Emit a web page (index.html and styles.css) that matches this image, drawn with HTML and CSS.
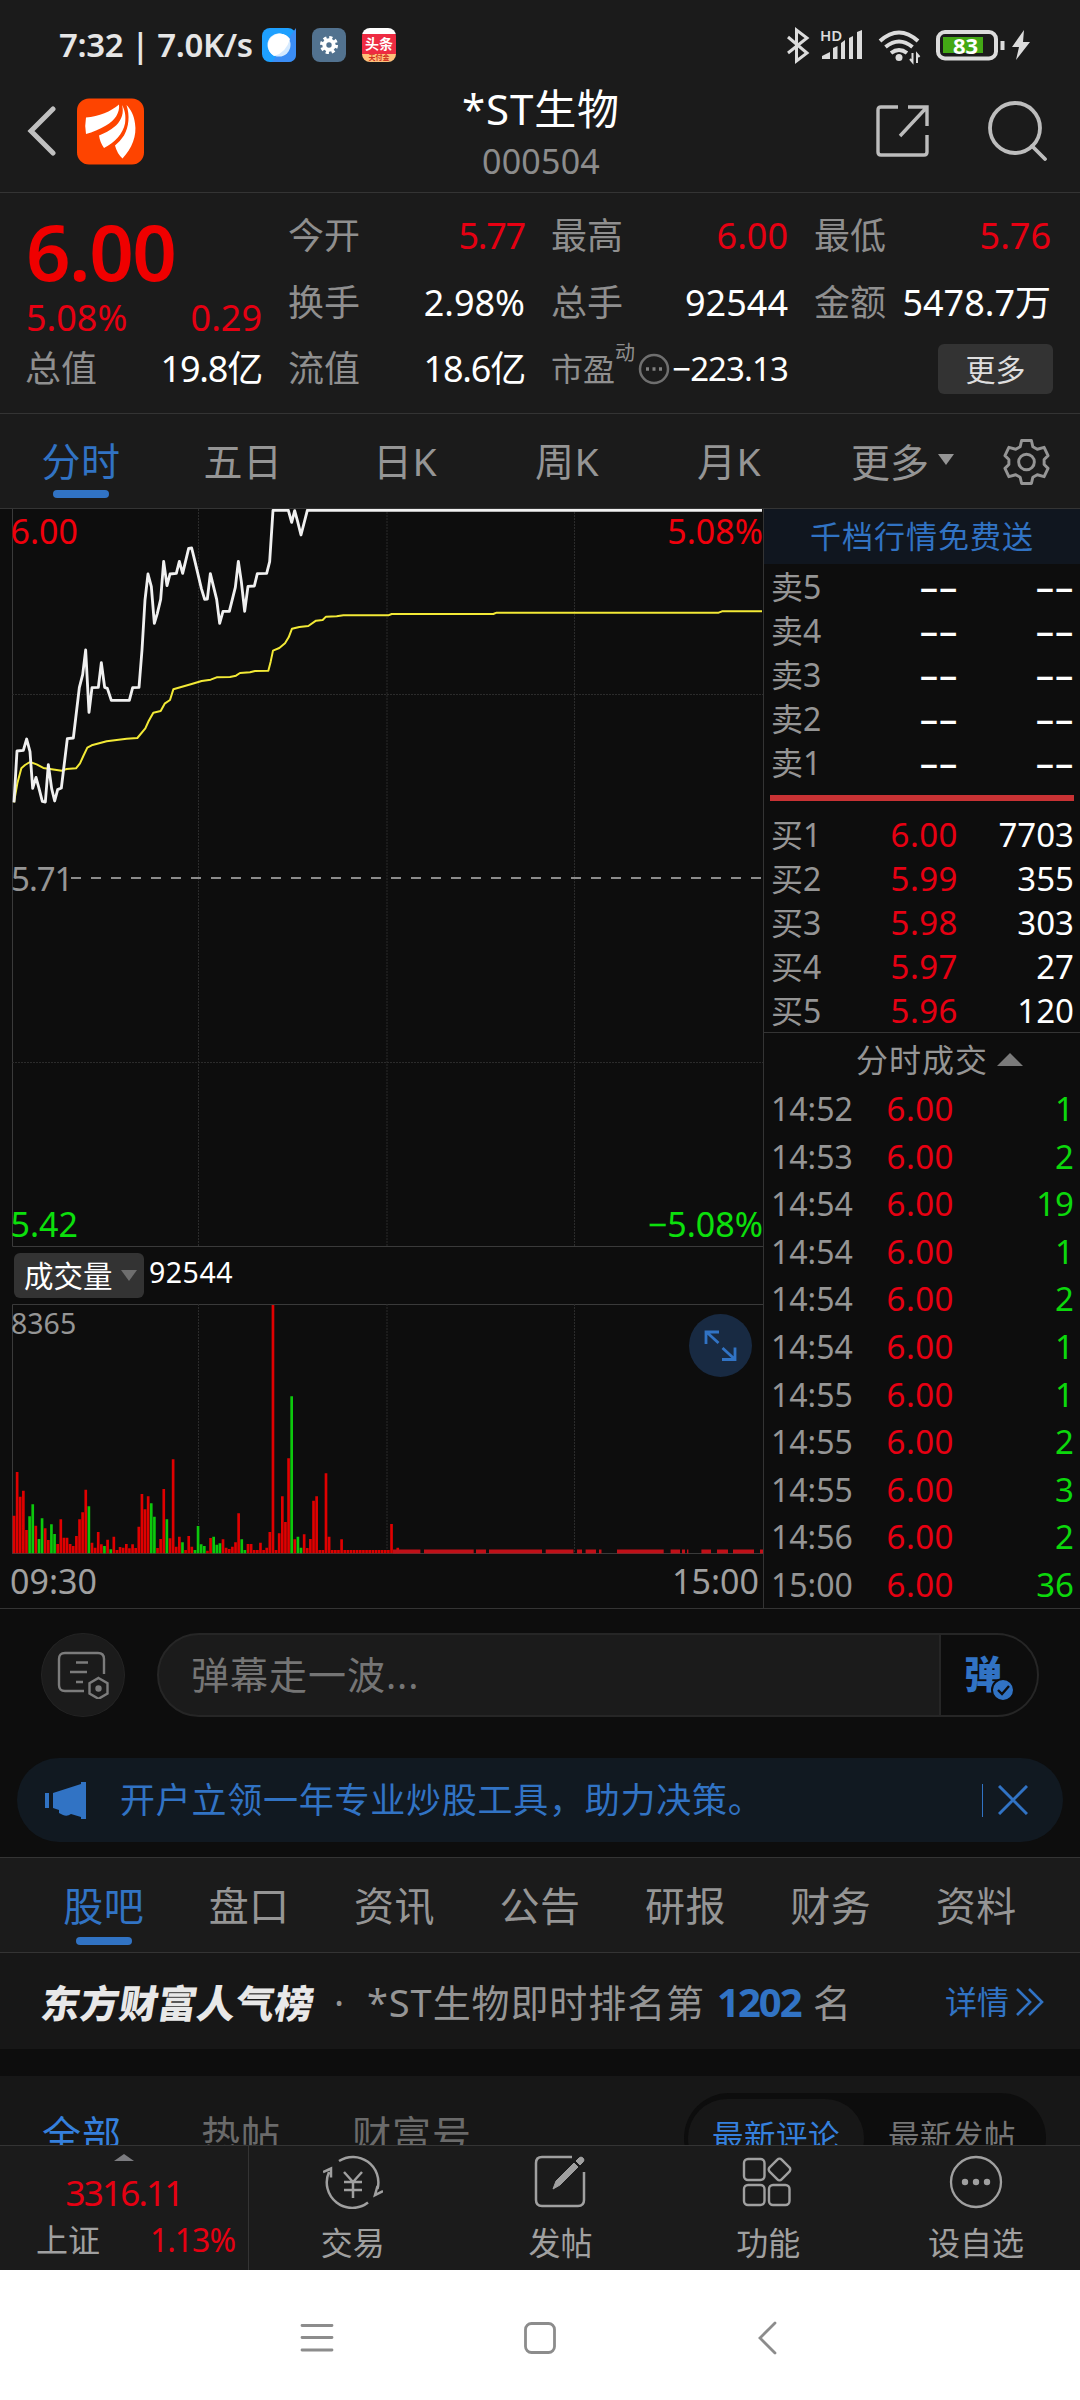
FILE: index.html
```html
<!DOCTYPE html>
<html lang="zh-CN">
<head>
<meta charset="utf-8">
<title>*ST生物 000504</title>
<link rel="stylesheet" href="styles.css">
</head>
<body>
<div class="app">
  <div class="status">
    <span class="status-text">7:32 | 7.0K/s</span>
    <svg class="app-ic" viewBox="0 0 34 34"><rect width="34" height="34" rx="8" fill="#1ea0ff"/><path d="M34 0v26q0 8-8 8H10Z" fill="#3b8df5"/><circle cx="17" cy="17" r="11.5" fill="#d5eaff"/><path d="M28 11A12 12 0 1 0 12 28Q24 25 28 11Z" fill="#fff"/></svg>
    <svg class="app-ic" viewBox="0 0 34 34"><rect width="34" height="34" rx="8" fill="#52728f"/><circle cx="17" cy="17" r="4.7" fill="none" stroke="#fff" stroke-width="4"/><circle cx="17" cy="17" r="7.5" fill="none" stroke="#fff" stroke-width="3" stroke-dasharray="3.2 2.69"/></svg>
    <span class="toutiao app-ic"><b>头条</b><i>天付金</i></span>
    <svg class="status-right" width="250" height="40" viewBox="784 25 250 40" fill="none" stroke="#dcdcdc">
      <path d="M788 37l19 16-10.500 8V30l10.500 8-19 15" stroke-width="3"/>
      <text class="hd" x="820" y="41">HD</text>
      <path d="M822 59v-3l8-4v7zM833 59V48l4.500-2v13zM841 59V43l4-3v19zM849 59V38l4-2v23zM857 59V32l5-2v29z" fill="#dcdcdc" stroke="none"/>
      <path d="M880 41q19-17 38 0M885.500 47q13.500-11 27 0M891 53q8-6 16 0" stroke-width="4"/><circle cx="899" cy="57.500" r="3.500" fill="#dcdcdc" stroke="none"/>
      <path d="M912.500 53v9l-2.500-3M917 63v-9l2.500 3" stroke-width="2"/>
      <rect x="938" y="32" width="58" height="26.500" rx="7" stroke-width="4"/><rect x="943" y="37" width="40" height="16" fill="#43a815" stroke="none"/>
      <path d="M1002.500 41v9" stroke-width="4"/>
      <text class="pct" x="953" y="53.500">83</text>
      <path d="M1024 30l-12 17h7l-3 13 14-18h-7z" fill="#dcdcdc" stroke="none"/>
    </svg>
  </div>

  <header class="header">
    <svg class="back" viewBox="0 0 30 50"><path d="M26 3L4 25l22 22" fill="none" stroke="#c0c0c0" stroke-width="5" stroke-linecap="round"/></svg>
    <svg class="logo" viewBox="0 0 67 66"><rect width="67" height="66" rx="12" fill="#fe4400"/><g fill="#fff"><path d="M9 19C22 18 34 13 42 6 43 14 38 22 29 27 22 31 16 33.500 9 35.500Q7.500 27 9 19Z"/><path d="M45 6.500C47 14 45 21 39 27 33 32 27 35 22 37Q23 44 27 49.500C38 44 46 35 48 25 49 17 48 12 45 6.500Z"/><path d="M49.500 6.500C53 17 52 28 47 37Q43 43 38 47 40 55 45.500 60C55 50 60 37 58 25 57 17 54 11 49.500 6.500Z"/></g></svg>
    <div class="title"><div class="name">*ST生物</div><div class="code">000504</div></div>
    <svg class="share" viewBox="0 0 54 54" fill="none" stroke="#bdbdbd" stroke-width="3.400"><path d="M22 3H5Q2 3 2 6V48Q2 51 5 51H48Q51 51 51 48V31M32 3H51V22M51 3L24 32"/></svg>
    <svg class="search" viewBox="0 0 60 60" fill="none" stroke="#bdbdbd" stroke-width="3.800" stroke-linecap="round"><circle cx="27" cy="27" r="25"/><path d="M44 45l13 13"/></svg>
  </header>

  <section class="quote">
    <div class="col first">
      <div class="price">6.00</div>
      <div class="kv chg"><span>5.08%</span><span>0.29</span></div>
      <div class="kv"><label>总值</label><span class="tight">19.8亿</span></div>
    </div>
    <div class="col">
      <div class="kv"><label>今开</label><span class="red tight">5.77</span></div>
      <div class="kv"><label>换手</label><span>2.98%</span></div>
      <div class="kv"><label>流值</label><span class="tight">18.6亿</span></div>
    </div>
    <div class="col">
      <div class="kv"><label>最高</label><span class="red">6.00</span></div>
      <div class="kv"><label>总手</label><span>92544</span></div>
      <div class="kv pe"><label>市盈<sup>动</sup></label><svg viewBox="0 0 32 32"><circle cx="16" cy="16" r="14" fill="none" stroke="#6f6f6f" stroke-width="2.500"/><path d="M8 16h3M14.500 16h3M21 16h3" stroke="#808080" stroke-width="3.400"/></svg><span>−223.13</span></div>
    </div>
    <div class="col">
      <div class="kv"><label>最低</label><span class="red">5.76</span></div>
      <div class="kv"><label>金额</label><span>5478.7万</span></div>
      <div class="kv"><button class="more">更多</button></div>
    </div>
  </section>

  <nav class="periods">
    <a class="on">分时</a><a>五日</a><a>日K</a><a>周K</a><a>月K</a>
    <span class="pmore">更多<i class="tri"></i></span>
    <svg class="gear" viewBox="0 0 48 48" fill="none" stroke="#959595" stroke-width="3" stroke-linejoin="round"><path d="M19 2h10l1.500 6.500 4.500 2.500 7-2 4 8.500-4 4v5l4 4-4 8.500-7-2-4.500 2.500L29 46H19l-1.500-6.500L13 37l-7 2-4-8.500 4-4v-5l-4-4L6 9l7 2 4.500-2.500z"/><circle cx="24" cy="24" r="8"/></svg>
  </nav>

  <main class="market">
    <div class="charts">
      <svg class="price-chart" viewBox="0 509 763 738" width="763" height="738">
        <g class="grid"><path d="M12.500 509V1246.500H763" /><path class="dot" d="M198.500 509V1246M387 509V1246M574.500 509V1246M12 694.500H763M12 1062.500H763"/></g>
        <path class="mid" d="M71 878H762"/>
        <g transform="translate(0 400) scale(.33333)">
          <polyline class="avg" points="42,1207 52,1150 64,1105 75,1095 90,1086 110,1093 130,1104 185,1112 200,1107 228,1105 240,1090 250,1068 262,1043 275,1036 320,1024 380,1016 412,1014 436,985 446,963 460,938 482,933 494,911 510,900 520,868 575,852 605,843 632,839 650,832 690,831 708,827 720,819 750,817 765,813 805,812 812,785 819,752 838,744 855,730 866,712 876,686 898,681 925,678 948,662 968,660 978,650 1010,649 1030,646 1165,646 1175,642 1480,642 1490,638 2156,638 2166,634 2286,634"/>
          <polyline class="now" points="42,1207 51,1053 70,1051 80,1017 90,1055 98,1165 108,1132 117,1165 127,1204 136,1206 145,1094 155,1166 164,1203 173,1169 184,1164 193,1090 202,1016 220,1014 238,863 248,824 257,750 267,937 276,863 295,862 304,788 314,862 322,865 334,901 388,901 398,863 417,862 426,750 435,600 444,522 454,560 463,670 472,640 482,598 491,484 501,557 510,522 529,520 538,484 548,520 566,445 575,444 585,485 604,565 614,598 622,597 631,521 650,598 659,670 669,634 688,634 706,562 715,484 724,545 734,634 744,559 763,558 772,521 800,520 809,485 819,331 865,331 875,367 884,332 893,365 903,405 922,331 2286,331"/>
        </g>
        <g class="lbl"><text class="r" x="10.500" y="544">6.00</text><text class="r e" x="763" y="544">5.08%</text><text class="z" x="11" y="891">5.71</text><text class="g" x="10.500" y="1237">5.42</text><text class="g e" x="763" y="1237">−5.08%</text></g>
      </svg>
      <div class="vol-head"><span class="vol-btn">成交量<i class="tri"></i></span><span class="vol-num">92544</span></div>
      <div class="vol-wrap">
        <svg viewBox="0 1304 763 250" width="763" height="250">
          <g class="grid"><path d="M12.500 1553.500V1304.500H763M12 1553.500H763"/><path class="dot" d="M198.500 1304V1553M387 1304V1553M574.500 1304V1553"/></g>
          <g transform="translate(0 1180) scale(.33333)"><path id="up" class="bar up"/><path id="down" class="bar down"/></g>
          <path class="flat" d="M393 1551.500H420.400M424 1551.500H473.700M476 1551.500H486M489 1551.500H542M545.700 1551.500H573.500M577 1551.500H582M585.600 1551.500H593M593 1551.500H596M599 1551.500H601.500M617 1551.500H663.700M670.600 1551.500H680M682 1551.500H685M687 1551.500H688.400M701.400 1551.500H711M717 1551.500H728M733 1551.500H754M760 1551.500H763"/>
          <text class="vmax" x="11" y="1334">8365</text>
          <circle cx="720.500" cy="1345.500" r="31.500" fill="#182a42"/>
          <path d="M719 1332h-13v12M706.500 1332l12 11M722 1359.500h13v-12M734.500 1359l-12-11" fill="none" stroke="#3173c4" stroke-width="2.800"/>
        </svg>
      </div>
      <div class="axis"><span>09:30</span><span>15:00</span></div>
    </div>
    <aside class="book">
      <div class="ad">千档行情免费送</div>
      <div class="rows sell">
        <div><label>卖5</label><b><i>--</i></b><span><i>--</i></span></div>
        <div><label>卖4</label><b><i>--</i></b><span><i>--</i></span></div>
        <div><label>卖3</label><b><i>--</i></b><span><i>--</i></span></div>
        <div><label>卖2</label><b><i>--</i></b><span><i>--</i></span></div>
        <div><label>卖1</label><b><i>--</i></b><span><i>--</i></span></div>
      </div>
      <div class="ratio"></div>
      <div class="rows buy">
        <div><label>买1</label><b>6.00</b><span>7703</span></div>
        <div><label>买2</label><b>5.99</b><span>355</span></div>
        <div><label>买3</label><b>5.98</b><span>303</span></div>
        <div><label>买4</label><b>5.97</b><span>27</span></div>
        <div><label>买5</label><b>5.96</b><span>120</span></div>
      </div>
      <div class="tick-head">分时成交<i></i></div>
      <div class="rows ticks">
        <div><label>14:52</label><b>6.00</b><span>1</span></div>
        <div><label>14:53</label><b>6.00</b><span>2</span></div>
        <div><label>14:54</label><b>6.00</b><span>19</span></div>
        <div><label>14:54</label><b>6.00</b><span>1</span></div>
        <div><label>14:54</label><b>6.00</b><span>2</span></div>
        <div><label>14:54</label><b>6.00</b><span>1</span></div>
        <div><label>14:55</label><b>6.00</b><span>1</span></div>
        <div><label>14:55</label><b>6.00</b><span>2</span></div>
        <div><label>14:55</label><b>6.00</b><span>3</span></div>
        <div><label>14:56</label><b>6.00</b><span>2</span></div>
        <div><label>15:00</label><b>6.00</b><span>36</span></div>
      </div>
    </aside>
  </main>

  <section class="danmu">
    <span class="dm-set"><svg viewBox="0 0 52 48" width="52" height="48" fill="none" stroke="#7c7c7c" stroke-width="2.400"><path d="M27 40H8Q2 40 2 34V8Q2 2 8 2H41Q47 2 47 8V23M19 11.500H31M13 21H30M19 31H26"/><path d="M41.500 27l9 5.200v10.400l-9 5.200-9-5.200V32.200z"/><circle cx="41.500" cy="37.500" r="2" fill="#7c7c7c"/></svg></span>
    <div class="dm-input"><span>弹幕走一波...</span><div class="dm-on">弹<svg viewBox="0 0 24 24"><circle cx="12" cy="12" r="11" fill="#3173c4" stroke="#0d0d0d" stroke-width="2"/><path d="M7 12l4 4 7-8" fill="none" stroke="#0d0d0d" stroke-width="2.400"/></svg></div></div>
  </section>

  <section class="promo">
    <svg class="horn" viewBox="0 0 42 37" fill="#3173c4"><path d="M0 11h4v15H0zM8 11L36 2V0h5v37h-5v-2l-10-3q-4 3-8 1l-4-2v-3l-6-2z"/></svg>
    <span class="promo-t">开户立领一年专业炒股工具，助力决策。</span>
    <i></i>
    <svg class="x" viewBox="0 0 30 30" stroke="#3173c4" stroke-width="3"><path d="M1 1L29 29M29 1L1 29"/></svg>
  </section>

  <nav class="tabs"><a class="on">股吧</a><a>盘口</a><a>资讯</a><a>公告</a><a>研报</a><a>财务</a><a>资料</a></nav>

  <section class="rank">
    <span class="rank-t">东方财富人气榜</span><span class="sep">·</span><span class="rank-d">*ST生物即时排名第</span><b>1202</b><span>名</span>
    <a>详情<svg viewBox="0 0 28 30" fill="none" stroke="#3173c4" stroke-width="2.600"><path d="M1 2l13 13L1 28M13 2l13 13-13 13"/></svg></a>
  </section>

  <section class="posts">
    <a class="on">全部</a><a>热帖</a><a>财富号</a>
    <div class="seg"><span class="on">最新评论</span><span>最新发帖</span></div>
  </section>

  <footer class="bottom">
    <div class="index"><i></i><b>3316.11</b><div><span>上证</span><em>1.13%</em></div></div>
    <div class="act"><svg viewBox="0 0 60 54" fill="none" stroke="#a0a0a0" stroke-width="2.500"><path d="M16 6A25.500 25.500 0 0 1 54.500 34M45 47.500A25.500 25.500 0 0 1 6 17M0 17l8-3.500v9M60 36l-8 4 2.500-9M21 17l9 10 9-10M30 27v16M21 27h18M21 35h18"/></svg><span>交易</span></div>
    <div class="act"><svg viewBox="0 0 60 54" fill="none" stroke="#a0a0a0" stroke-width="2.500"><path d="M41 2H11Q5 2 5 8V45Q5 51 11 51H47Q53 51 53 45V17"/><path d="M22 34l3-8L43 8l4 4-18 18zM45 6l3-3q2-2 4 0t0 4l-3 3z" fill="#a0a0a0" stroke-width="1"/></svg><span>发帖</span></div>
    <div class="act"><svg viewBox="0 0 60 54" fill="none" stroke="#a0a0a0" stroke-width="2.400"><rect x="6" y="4" width="20.500" height="21" rx="4"/><rect x="6" y="30" width="20.500" height="20" rx="4"/><rect x="31" y="30" width="20.500" height="20" rx="4"/><rect x="33" y="6" width="17" height="17" rx="3" transform="rotate(45 41.500 14.500)"/></svg><span>功能</span></div>
    <div class="act"><svg viewBox="0 0 60 54" fill="none" stroke="#a0a0a0" stroke-width="2.300"><circle cx="30" cy="27" r="25"/><g fill="#a0a0a0" stroke="none"><circle cx="19" cy="27" r="3.200"/><circle cx="30" cy="27" r="3.200"/><circle cx="41" cy="27" r="3.200"/></g></svg><span>设自选</span></div>
  </footer>

  <div class="sysnav">
    <svg viewBox="0 0 1080 130" fill="none" stroke="#8c8c8c" stroke-width="2.800"><path d="M302 55.500H332M302 67.500H332M302 80H332" stroke-linecap="round"/><rect x="525.500" y="53.500" width="29" height="29" rx="6"/><path d="M775 53L760 68l15 15" stroke-linecap="round"/></svg>
  </div>
</div>
<script src="chart.js"></script>
</body>
</html>
```
FILE: styles.css
```css
* { box-sizing: border-box; }
body { margin: 0; background: #0d0d0d; font-family: "Noto Sans", "Noto Sans CJK SC", sans-serif; color: #fff; }
i, em { font-style: normal; }
svg { display: block; flex: none; }
.app { width: 1080px; height: 2400px; display: flex; flex-direction: column; overflow: hidden; }
.app > * { flex: none; }
.red { color: #e60012; }

.status { height: 88px; background: #1b1b1b; display: flex; align-items: center; padding: 2px 46px 0 59px; }
.status-text { font-size: 33px; font-weight: 600; color: #e6e6e6; width: 203px; white-space: nowrap; letter-spacing: -.4px; margin-top: -2px; }
.app-ic { width: 34px; height: 34px; margin-right: 16px; }
.toutiao { border-radius: 8px; overflow: hidden; background: linear-gradient(#fff 0 6px, #ee2b42 6px 26px, #ffc07a 26px); display: flex; flex-direction: column; align-items: center; }
.toutiao b { font-size: 14px; line-height: 18px; margin-top: 7px; }
.toutiao i { font-size: 7px; line-height: 9px; color: #d03020; font-weight: 700; }
.status-right { margin-left: auto; }
.hd { font-size: 15px; font-weight: 600; fill: #dcdcdc; stroke: none; }
.pct { font-size: 22px; font-weight: 700; fill: #fff; stroke: none; }

.header { height: 105px; background: #1b1b1b; border-bottom: 1px solid #343434; display: flex; align-items: flex-start; padding-top: 10px; }
.back { width: 30px; height: 50px; margin: 8px 20px 0 27px; }
.logo { width: 67px; height: 67px; }
.title { flex: 1; text-align: center; padding-left: 62px; }
.name { font-size: 42px; line-height: 46px; letter-spacing: .9px; margin-top: -12px; }
.code { font-size: 34px; line-height: 38px; color: #8c8c8c; margin-top: 10px; letter-spacing: .2px; }
.share { width: 54px; height: 54px; margin: 6px 58px 0 0; }
.search { width: 60px; height: 60px; margin: 3px 32px 0 0; }

.quote { height: 221px; background: #1b1b1b; border-bottom: 1px solid #343434; display: grid; grid-template-columns: repeat(4, 236px); column-gap: 27px; padding: 10px 0 0 26px; }
.kv { height: 66.500px; display: flex; justify-content: space-between; align-items: center; font-size: 36px; line-height: 66px; white-space: nowrap; }
.kv label { color: #8f8f8f; margin-left: -1px; }
.tight { letter-spacing: -1.200px; }
.price { font-size: 78px; font-weight: 600; line-height: 84px; height: 90px; color: #f00000; padding-top: 6px; letter-spacing: -1.500px; }
.chg { height: 43px; color: #e60012; line-height: 43px; padding-top: 5px; }
.first .kv:last-child { height: 66.500px; }
.pe { font-size: 33px; }
.pe label { display: flex; font-size: 32px; }
.pe sup { font-size: 20px; line-height: 30px; margin-top: 2px; }
.pe svg { width: 32px; height: 32px; }
.pe span { letter-spacing: -.9px; }
.more { margin-left: auto; margin-right: -2px; width: 115px; height: 50px; border: 0; border-radius: 6px; background: #333; color: #dedede; font: 30px/47px "Noto Sans", "Noto Sans CJK SC", sans-serif; padding: 0; }

.periods { height: 95px; background: #1b1b1b; border-bottom: 1px solid #343434; display: flex; align-items: stretch; font-size: 39px; line-height: 93px; color: #959595; }
.periods a { width: 162px; text-align: center; letter-spacing: .5px; }
.periods a.on, .tabs a.on { color: #3173c4; display: flex; flex-direction: column; align-items: center; }
.periods a.on::after { content: ""; width: 56px; height: 8px; border-radius: 4px; background: #3173c4; margin-top: -17px; }
.pmore { display: flex; align-items: center; margin-left: 41px; width: 152px; }
.tri { border: 8px solid transparent; border-top: 11px solid #959595; border-bottom: 0; }
.pmore .tri { margin-left: 9px; margin-top: -4px; }
.gear { width: 47px; height: 48px; margin-top: 24px; }

.market { display: flex; height: 1100px; border-bottom: 1px solid #343434; }
.charts { width: 763px; }
.grid { fill: none; stroke: #3a3a3a; stroke-width: 1; }
.dot { stroke: #2b2b2b; stroke-dasharray: 2 1; }
.mid { stroke: #8c8c8c; stroke-width: 2; stroke-dasharray: 10 10; }
.avg, .now { fill: none; stroke-linejoin: round; }
.avg { stroke: #f2e936; stroke-width: 6; }
.now { stroke: #f0f0f0; stroke-width: 8.500; }
.lbl { font-size: 34px; fill: #959595; }
.z { font-size: 33px; letter-spacing: -1px; }
.r { fill: #f0000c; }
.g { fill: #0ce00c; }
.e { text-anchor: end; }
.vol-head { height: 57px; display: flex; align-items: flex-start; padding: 6px 0 0 14px; }
.vol-btn { width: 130px; height: 45px; border-radius: 6px; background: #333; font-size: 29.500px; line-height: 44px; display: flex; align-items: center; padding-left: 10px; white-space: nowrap; }
.vol-btn .tri { margin-left: 8px; border-top-color: #6e6e6e; }
.vol-num { font-size: 28.500px; line-height: 38px; margin-left: 5px; letter-spacing: .5px; }
.bar { fill: none; stroke-width: 8; }
.up { stroke: #e00000; }
.down { stroke: #0cc80c; }
.flat { stroke: #c01018; stroke-width: 4; }
.vmax { font-size: 28.500px; fill: #959595; }
.axis { display: flex; justify-content: space-between; padding: 0 4px 0 10px; font-size: 34px; line-height: 54px; color: #a0a0a0; }

.book { flex: 1; border-left: 1px solid #343434; font-size: 33px; }
.ad { height: 55px; background: #10161f; color: #3173c4; font-size: 31px; letter-spacing: 1px; line-height: 55px; text-align: center; }
.rows { padding: 0 7px 0 7px; }
.rows div { display: flex; line-height: 44px; height: 44px; }
.rows label { width: 90px; color: #959595; white-space: nowrap; font-size: 32px; }
.rows b { font-weight: 400; color: #e60012; width: 97px; text-align: right; letter-spacing: .5px; }
.rows span { flex: 1; text-align: right; margin-right: -1px; }
.sell { padding-top: 1px; }
.sell i { display: inline-block; font-size: 31px; font-weight: 600; letter-spacing: 0; color: #fff; transform: scaleX(1.95); transform-origin: right; margin-top: -1px; }
.ratio { height: 6px; margin: 10px 6px 0 6px; background: #c83234; }
.buy { padding-top: 12px; height: 231px; }
.tick-head { height: 52px; border-top: 1px solid #343434; display: flex; align-items: center; padding: 2px 0 0 92px; color: #959595; font-size: 32px; letter-spacing: 1px; line-height: 50px; }
.tick-head i { border: 13px solid transparent; border-bottom: 13px solid #7a7a7a; border-top: 0; margin-left: 9px; }
.ticks div { height: 47.600px; line-height: 50px; }
.ticks b { width: 93px; }
.ticks span { color: #0cd80c; }

.danmu { height: 149px; display: flex; padding: 24px 41px 0; }
.dm-set { width: 84px; height: 84px; border-radius: 50%; background: #1b1b1b; border: 1px solid #242424; margin-right: 32px; display: flex; align-items: center; justify-content: center; }
.dm-input { width: 883px; height: 84px; border: 2px solid #262626; border-radius: 42px; background: #1b1b1b; overflow: hidden; display: flex; justify-content: space-between; font-size: 38px; letter-spacing: 1px; line-height: 79px; color: #757575; padding-left: 32px; }
.dm-on { width: 98px; border-left: 2px solid #262626; background: #0d0d0d; color: #3173c4; font-weight: 900; line-height: 76px; padding-left: 23px; display: flex; }
.dm-on svg { width: 24px; height: 24px; margin: 43px 0 0 -12px; }

.promo { height: 84px; margin: 0 17px; border-radius: 42px; background: #111921; display: flex; align-items: center; color: #3173c4; padding-left: 28px; }
.horn { width: 42px; height: 37px; }
.promo-t { font-size: 35px; letter-spacing: .75px; line-height: 84px; margin-left: 33px; width: 844px; white-space: nowrap; }
.promo i { width: 1px; height: 33px; background: #3173c4; margin-left: 18px; }
.x { width: 30px; height: 30px; margin-left: 15px; }

.tabs { height: 96px; margin-top: 15px; background: #1b1b1b; border-top: 1px solid #343434; border-bottom: 1px solid #343434; display: flex; padding: 0 31px; font-size: 40px; line-height: 96px; color: #959595; }
.tabs a { flex: 1; text-align: center; letter-spacing: .5px; }
.tabs a.on::after { content: ""; width: 56px; height: 8px; border-radius: 4px; background: #3173c4; margin-top: -17px; }

.rank { height: 96px; background: #171717; display: flex; align-items: center; font-size: 38px; color: #959595; white-space: nowrap; padding: 1px 36px 0 42px; line-height: 92px; }
.rank-t { font-size: 38.500px; font-weight: 900; color: #e8e8e8; transform: skewX(-9deg); width: 272px; margin-top: 2px; letter-spacing: .4px; }
.sep { width: 53px; padding-left: 20px; }
.rank-d { width: 336px; letter-spacing: .9px; }
.rank b { color: #3173c4; font-size: 40px; width: 96px; margin-left: 14px; letter-spacing: -2px; }
.rank a { margin-left: auto; color: #3173c4; font-size: 32px; display: flex; align-items: center; }
.rank a svg { width: 28px; height: 30px; margin-left: 7px; }

.posts { height: 69px; margin-top: 27px; background: #171717; display: flex; overflow: hidden; font-size: 39px; line-height: 74px; padding: 21px 34px 0 42px; color: #6a6a6a; }
.posts a { letter-spacing: 1px; margin-right: 79px; white-space: nowrap; }
.posts a + a { margin-right: 71px; }
.posts .on { color: #3580dd; }
.seg { margin: -4px 0 0 auto; flex: none; width: 362px; height: 90px; border-radius: 45px; background: #0d0d0d; display: flex; padding: 6px 4px; font-size: 31.500px; letter-spacing: .5px; color: #757575; }
.seg span { width: 176px; height: 78px; border-radius: 39px; text-align: center; line-height: 73px; }
.seg .on { background: #171717; }

.bottom { height: 125px; border-top: 1px solid #343434; background: #1b1b1b; display: flex; }
.index { width: 249px; border-right: 1px solid #343434; display: flex; flex-direction: column; align-items: center; color: #e60012; }
.index i { border: 10px solid transparent; border-bottom: 7px solid #7c7c80; border-top: 0; margin-top: 8px; }
.index b { font-weight: 400; font-size: 35px; line-height: 50px; margin-top: 7px; letter-spacing: -1.800px; }
.index div { align-self: stretch; display: flex; justify-content: space-between; padding: 0 13px 0 36px; font-size: 32px; line-height: 44px; letter-spacing: -1px; }
.index span { color: #a0a0a0; letter-spacing: 0; }
.act { flex: 1; display: flex; flex-direction: column; align-items: center; color: #a0a0a0; font-size: 32px; line-height: 44px; padding-top: 9px; }
.act svg { width: 60px; height: 54px; margin-bottom: 12px; }
.sysnav { height: 130px; background: #fff; }
```
FILE: chart.js
```js
// Bar tops per minute on a baseline of 1120; negative values are falling minutes.
const BASE = 1120;
const tops = [
  1007, 876, 950, 932, 1050, -1009, -973, 1037, -1077, -1015, 1045, 1080, -1033, -1062, 1092, 1018,
  1073, 1073, 1092, 1098, 1068, 1018, 997, 929, -979, 1088, 1103, 1056, 1093, -1098, 1079, -1108,
  1070, 1110, 1101, 1103, 1092, 1105, 1093, 1104, 1040, 942, 988, 949, -970, -1010, 1104, 1077,
  927, -1018, 1075, 838, 1100, 1070, -1087, 1110, 1068, 1100, -1110, -1038, -1093, -1098, 1112,
  1074, -1070, -1094, -1090, 1078, 1103, 1107, 1100, 1087, 1000, -1078, -1110, 1092, 1092, 1110,
  1110, 1088, 1110, 1103, 1056, 375, 1110, 1060, 949, 1026, 835, -649, 1078, -1070, -1103, 1063,
  1104, 1077, 962, 949, 1110, 1110, 880, 1070, 1110, 1110, 1110, 1078, 1110, 1110, 1110, 1110,
  1110, 1110, 1110, 1110, 1110, 1110, 1110, 1110, 1110, 1110, 1110, 1032, 1110, 1103
];
const paths = { up: '', down: '' };
tops.forEach((t, i) => {
  const x = (42 + 9.36 * i).toFixed(1);
  paths[t > 0 ? 'up' : 'down'] += `M${x} ${BASE}V${Math.abs(t)}`;
});
for (const id in paths) document.getElementById(id).setAttribute('d', paths[id]);
```
